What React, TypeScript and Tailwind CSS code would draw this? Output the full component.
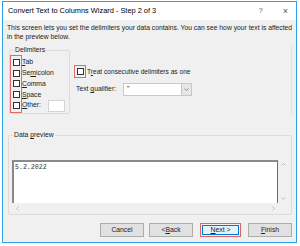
import React from "react";

function Box() {
  return <div className="w-[7px] h-[7px] border border-[#333333] bg-white shrink-0" />;
}

function Btn({ children, primary = false }: { children: React.ReactNode; primary?: boolean }) {
  if (primary) {
    return (
      <div className="h-[14px] w-[41px] border border-[#e06666] p-px">
        <div className="h-full w-full border border-[#0078d7] bg-[#e5f1fb] flex items-center justify-center text-[6.8px] text-[#222]">
          {children}
        </div>
      </div>
    );
  }
  return (
    <div className="h-[14px] w-[44px] border border-[#adadad] bg-[#e1e1e1] flex items-center justify-center text-[6.8px] text-[#222]">
      {children}
    </div>
  );
}

const delimiters: [string, string, string][] = [
  ["", "T", "ab"],
  ["Se", "m", "icolon"],
  ["", "C", "omma"],
  ["", "S", "pace"],
  ["", "O", "ther:"],
];

export default function App() {
  return (
    <div className="w-[300px] h-[246px] bg-white pt-px pl-[2px] pr-[3px] pb-[3px] font-['Liberation_Sans',Arial,sans-serif] text-[#222]">
      <div className="h-full flex flex-col border border-[#2ba3e3]">
        {/* title bar */}
        <div className="h-[18px] bg-white flex items-center pl-[5px] pr-[8px] text-[7.4px] text-black">
          <span>Convert Text to Columns Wizard - Step 2 of 3</span>
          <span className="ml-auto mr-[20px] text-[7px] text-[#555]">?</span>
          <span className="text-[9px] text-[#555] leading-none">×</span>
        </div>

        {/* body */}
        <div className="flex-1 bg-[#f0f0f0] flex flex-col">
          <p className="pt-[3px] pl-[4px] pr-[2px] text-[6.75px] leading-[9px] whitespace-nowrap">
            This screen lets you set the delimiters your data contains. You can see how your text is affected
            <br />
            in the preview below.
          </p>

          <div className="mt-[5px] flex mr-[4px] border-r border-[#e2e2e2]">
            <fieldset className="ml-[6px] w-[61px] h-[68px] border border-[#dcdcdc] rounded-[2px] px-[3px] relative">
              <legend className="text-[6.8px] leading-[8px] px-px ml-px">Delimiters</legend>
              <div className="pt-[3px] flex flex-col">
                {delimiters.map(([a, u, b]) => (
                  <div key={u + b} className="h-[10.8px] flex items-center gap-[2px] text-[6.8px]">
                    <Box />
                    <span>
                      {a}
                      <span className="underline">{u}</span>
                      {b}
                    </span>
                    {b === "ther:" && <div className="ml-auto mr-[1px] w-[17px] h-[12px] bg-white border border-[#d4d4d4]" />}
                  </div>
                ))}
              </div>
              <div className="absolute left-0 top-[1px] w-[12px] h-[58px] border border-[#e46a6a]" />
            </fieldset>

            <div className="ml-[4px] pt-[19px] flex flex-col flex-1">
              <div className="flex items-center">
                <div className="w-[12px] h-[13px] border border-[#e46a6a] flex items-center justify-center shrink-0">
                  <Box />
                </div>
                <span className="ml-px text-[6.6px] whitespace-nowrap">
                  T<span className="underline">r</span>eat consecutive delimiters as one
                </span>
              </div>
              <div className="mt-[5px] flex items-center pl-[2px]">
                <span className="w-[47px] text-[6.8px] whitespace-nowrap">
                  Text <span className="underline">q</span>ualifier:
                </span>
                <div className="w-[69px] h-[13px] bg-white border border-[#c8c8c8] flex items-center">
                  <span className="pl-[3px] text-[7px]">"</span>
                  <div className="ml-auto w-[10px] h-full bg-[#e6e6e6] border-l border-[#c8c8c8] flex items-center justify-center">
                    <svg width="5" height="3" viewBox="0 0 5 3">
                      <path d="M0.5 0.5 L2.5 2.5 L4.5 0.5" fill="none" stroke="#777" strokeWidth="0.8" />
                    </svg>
                  </div>
                </div>
              </div>
            </div>
          </div>

          <fieldset className="mt-[17px] ml-[5px] mr-[4px] h-[84px] border border-[#dcdcdc] rounded-[2px] px-[3px]">
            <legend className="text-[6.8px] leading-[8px] px-px ml-px">
              Data <span className="underline">p</span>review
            </legend>
            <div className="mt-[21px] flex flex-col">
              <div className="flex h-[43px]">
                <div className="flex-1 bg-white border-l-2 border-t-2 border-[#8a8a8a] border-r border-r-[#6e6e6e] pl-px pt-[2px]">
                  <div className="font-['Liberation_Mono',monospace] text-[6.6px] leading-[8px] text-[#333]">5.2.2022</div>
                </div>
                <div className="w-[10px] flex flex-col items-center justify-between py-[3px]">
                  <svg width="5" height="3" viewBox="0 0 5 3">
                    <path d="M0.5 2.5 L2.5 0.5 L4.5 2.5" fill="none" stroke="#b0b0b0" strokeWidth="0.8" />
                  </svg>
                  <svg width="5" height="3" viewBox="0 0 5 3">
                    <path d="M0.5 0.5 L2.5 2.5 L4.5 0.5" fill="none" stroke="#b0b0b0" strokeWidth="0.8" />
                  </svg>
                </div>
              </div>
              <div className="h-[10px] flex items-center pl-[4px] pr-[13px] justify-between">
                <svg width="3" height="5" viewBox="0 0 3 5">
                  <path d="M2.5 0.5 L0.5 2.5 L2.5 4.5" fill="none" stroke="#b0b0b0" strokeWidth="0.8" />
                </svg>
                <svg width="3" height="5" viewBox="0 0 3 5">
                  <path d="M0.5 0.5 L2.5 2.5 L0.5 4.5" fill="none" stroke="#b0b0b0" strokeWidth="0.8" />
                </svg>
              </div>
            </div>
          </fieldset>

          <div className="mt-[8px] flex justify-end pr-[4px]">
            <Btn>Cancel</Btn>
            <div className="ml-[5px]">
              <Btn>
                &lt; <span className="underline">B</span>ack
              </Btn>
            </div>
            <div className="ml-[7px]">
              <Btn primary>
                <span className="underline">N</span>ext &gt;
              </Btn>
            </div>
            <div className="ml-[7px]">
              <Btn>
                <span className="underline">F</span>inish
              </Btn>
            </div>
          </div>
        </div>
      </div>
    </div>
  );
}
